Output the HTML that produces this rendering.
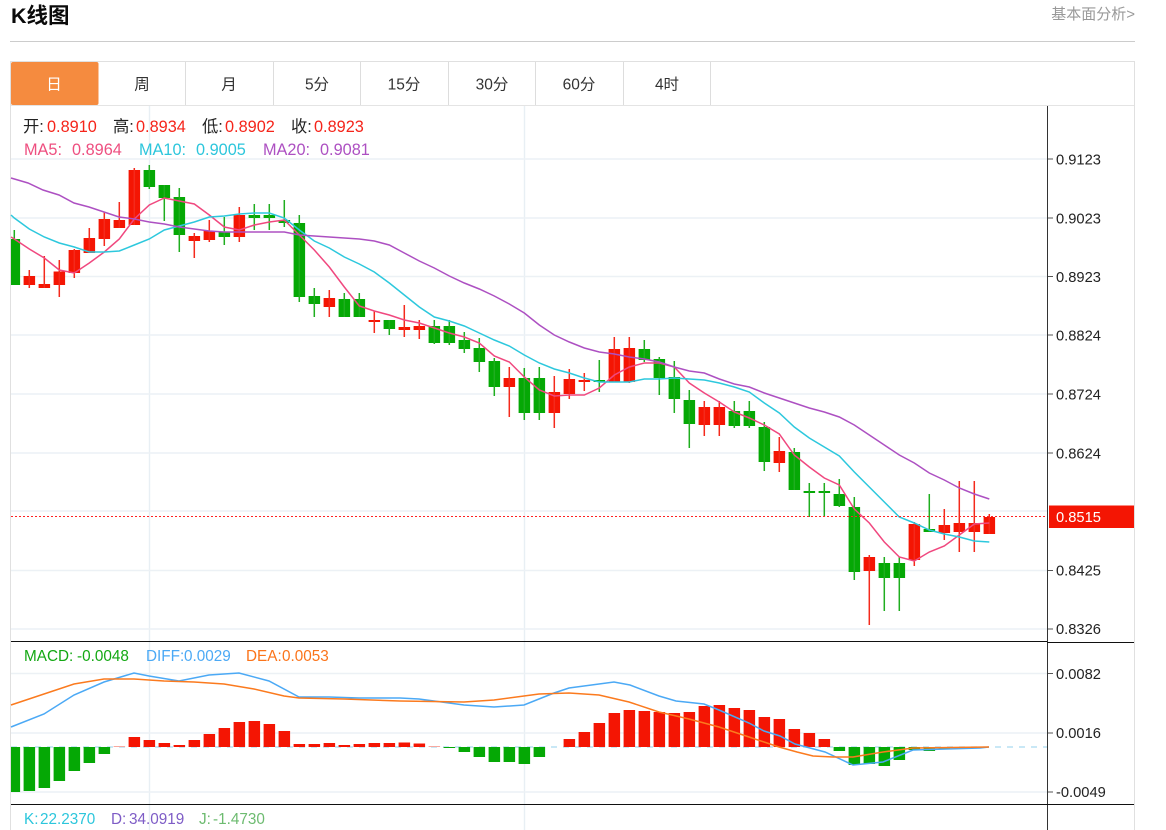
<!DOCTYPE html>
<html><head><meta charset="utf-8"><title>K线图</title>
<style>
html,body{margin:0;padding:0;background:#fff;width:1166px;height:830px;overflow:hidden}
svg{display:block;position:absolute;left:0;top:0}
text{font-family:"Liberation Sans","Noto Sans CJK SC",sans-serif}
</style></head><body>
<svg width="1166" height="830" viewBox="0 0 1166 830" xmlns="http://www.w3.org/2000/svg">
<text x="11" y="23" font-size="21.5" font-weight="700" fill="#0a0a0a">K线图</text>
<text x="1135" y="19" font-size="15" fill="#999" text-anchor="end">基本面分析&gt;</text>
<rect x="10" y="41" width="1125" height="1" fill="#ccc"/>

<!-- frame -->
<path d="M10.5 830V61.5H1134.5V830" fill="none" stroke="#e0e0e0"/>
<path d="M11 105.5H1134" stroke="#e4e4e4"/>
<rect x="11" y="62" width="87.5" height="43" rx="2" fill="#f58b3f"/>
<path d="M185.5 62V105M273.5 62V105M360.5 62V105M448.5 62V105M535.5 62V105M623.5 62V105M710.5 62V105" stroke="#ddd"/>
<g font-size="15.500" text-anchor="middle" fill="#333">
<text x="54" y="89.500" fill="#fff">日</text>
<text x="142" y="89.500">周</text>
<text x="229" y="89.500">月</text>
<text x="317" y="89.500">5分</text>
<text x="404" y="89.500">15分</text>
<text x="492" y="89.500">30分</text>
<text x="579" y="89.500">60分</text>
<text x="667" y="89.500">4时</text>
</g>

<!-- grid -->
<path d="M149.5 106V830M524.5 106V830" stroke="#e8eff4" stroke-width="1.4"/>
<path d="M11 159H1047M11 218H1047M11 276.500H1047M11 335H1047M11 394H1047M11 453H1047M11 511H1047M11 570.500H1047M11 629H1047M11 673.500H1047M11 733H1047M11 792H1047" stroke="#ecf1f5" stroke-width="1.4"/>

<!-- green candles -->
<path fill="#05a805" d="M11 239H20.100V285H11ZM143.600 170h11.500V187h-11.500ZM158.600 185h11.500V198h-11.500ZM173.600 197h11.500V235h-11.500ZM218.600 232h11.500V237h-11.500ZM248.600 215h11.500V218h-11.500ZM263.600 215h11.500V218h-11.500ZM278.600 220h11.500V223h-11.500ZM293.600 223h11.500V297h-11.500ZM308.600 296h11.500V304h-11.500ZM338.600 299h11.500V317h-11.500ZM353.600 299h11.500V317h-11.500ZM383.600 320h11.500V329h-11.500ZM428.600 326h11.500V343h-11.500ZM443.600 326h11.500V343h-11.500ZM458.600 340h11.500V349h-11.500ZM473.600 348h11.500V362h-11.500ZM488.600 361h11.500V387h-11.500ZM518.600 378h11.500V413h-11.500ZM533.600 378h11.500V413h-11.500ZM593.600 380h11.500V382h-11.500ZM638.600 349h11.500V360h-11.500ZM653.600 359h11.500V378h-11.500ZM668.600 377h11.500V399h-11.500ZM683.600 400h11.500V424h-11.500ZM728.600 411h11.500V426h-11.500ZM743.600 411h11.500V426h-11.500ZM758.600 427h11.500V462h-11.500ZM788.600 452h11.500V490h-11.500ZM803.600 491h11.500V493h-11.500ZM818.600 491h11.500V493h-11.500ZM833.600 494h11.500V506h-11.500ZM848.600 507h11.500V572h-11.500ZM878.600 563h11.500V578h-11.500ZM893.600 563h11.500V578h-11.500ZM923.600 529h11.500V532h-11.500Z"/>
<path fill="none" stroke="#1fae1f" stroke-width="1.500" d="M14.300 230V239M149.300 165V189M164.300 185V221M179.300 188V252M224.300 217V245M254.300 204V230M269.300 204V230M284.300 200V227M299.300 215V302M314.300 288V317M344.300 293V317M359.300 293V317M389.300 320V335M434.300 320V344M449.300 320V345M464.300 332V353M479.300 338V372M494.300 358V396M524.300 368V420M539.300 367V420M599.300 360V392M644.300 340V362M659.300 357V395M674.300 361V413M689.300 390V448M734.300 401V428M749.300 401V428M764.300 422V471M794.300 448V490M809.300 483V517M824.300 483V517M839.300 479V507M854.300 497V580M884.300 557V611M899.300 557V611M929.300 494V532"/>
<!-- red candles -->
<path fill="#f41503" d="M23.600 276h11.500V285h-11.500ZM38.600 284h11.500V288h-11.500ZM53.600 271.500h11.500V285h-11.500ZM68.600 250h11.500V273h-11.500ZM83.600 238h11.500V253h-11.500ZM98.600 219h11.500V239h-11.500ZM113.600 220h11.500V228h-11.500ZM128.600 170h11.500V225h-11.500ZM188.600 236h11.500V241h-11.500ZM203.600 231h11.500V240h-11.500ZM233.600 215h11.500V237h-11.500ZM323.600 298h11.500V307h-11.500ZM368.600 320h11.500V322h-11.500ZM398.600 327h11.500V330h-11.500ZM413.600 326h11.500V330h-11.500ZM503.600 378h11.500V387h-11.500ZM548.600 392h11.500V413h-11.500ZM563.600 379h11.500V394h-11.500ZM578.600 380h11.500V382h-11.500ZM608.600 349h11.500V382h-11.500ZM623.600 348h11.500V382h-11.500ZM698.600 407h11.500V425h-11.500ZM713.600 407h11.500V425h-11.500ZM773.600 451h11.500V463h-11.500ZM863.600 557h11.500V571h-11.500ZM908.600 524h11.500V560h-11.500ZM938.600 525h11.500V533h-11.500ZM953.600 523h11.500V532h-11.500ZM968.600 523h11.500V532h-11.500ZM983.600 517h11.500V534h-11.500Z"/>
<path fill="none" stroke="#f42a1c" stroke-width="1.500" d="M29.300 270V288M44.300 256V288M59.300 260V297M74.300 249V278M89.300 228V253M104.300 212V246M119.300 202V228M134.300 168V225M194.300 233V258M209.300 220V242M239.300 207V242M329.300 290V317M374.300 311V333M404.300 305V337M419.300 320V339M509.300 367V417M554.300 376V428M569.300 369V399M584.300 373V391M614.300 337V382M629.300 337V383M704.300 401V436M719.300 401V436M779.300 437V472M869.300 555V625M914.300 522V566M944.300 509V540M959.300 481V552M974.300 481V552M989.300 514V534"/>

<!-- MA lines -->
<polyline fill="none" stroke="#f0487f" stroke-width="1.500" points="11,237 14.300,239 29.300,249 44.300,258 59.300,270 74.300,273 89.300,263 104.300,252 119.300,239 134.300,219 149.300,205 164.300,198 179.300,201 194.300,204 209.300,215 224.300,227 239.300,230 254.300,225 269.300,222 284.300,220 299.300,235 314.300,250 329.300,267 344.300,287 359.300,306 374.300,311 389.300,315 404.300,320 419.300,323 434.300,328 449.300,333 464.300,337 479.300,343 494.300,356 509.300,362 524.300,377 539.300,390 554.300,396 569.300,395 584.300,395 599.300,388 614.300,375 629.300,367 644.300,363 659.300,363 674.300,367 689.300,383 704.300,393 719.300,402 734.300,412 749.300,418 764.300,425 779.300,434 794.300,455 809.300,467 824.300,478 839.300,485 854.300,509 869.300,523 884.300,542 899.300,557 914.300,561 929.300,552 944.300,546 959.300,535 974.300,524 989.300,523"/>
<polyline fill="none" stroke="#2dc8dd" stroke-width="1.500" points="11,215 14.300,218 29.300,229 44.300,237 59.300,243 74.300,247 89.300,252 104.300,252 119.300,251 134.300,245 149.300,239 164.300,230 179.300,226 194.300,222 209.300,217 224.300,216 239.300,214 254.300,213 269.300,213 284.300,218 299.300,230 314.300,241 329.300,248 344.300,257 359.300,264 374.300,272 389.300,283 404.300,295 419.300,307 434.300,317 449.300,321 464.300,326 479.300,333 494.300,340 509.300,346 524.300,355 539.300,363 554.300,369 569.300,373 584.300,378 599.300,382 614.300,382 629.300,382 644.300,379 659.300,379 674.300,378 689.300,379 704.300,380 719.300,383 734.300,387 749.300,392 764.300,403 779.300,413 794.300,427 809.300,438 824.300,447 839.300,456 854.300,472 869.300,487 884.300,502 899.300,517 914.300,523 929.300,530 944.300,534 959.300,537 974.300,541 989.300,542"/>
<polyline fill="none" stroke="#ad50c2" stroke-width="1.500" points="11,178 28,183 43,190 59,195 74,203 89,207 104,212 119,217 134.300,219 149.300,222 164.300,224 179.300,227 194.300,229 209.300,231 224.300,232 239.300,232 254.300,232 269.300,232 284.300,232 299.300,235 314.300,236 329.300,237 344.300,238 359.300,239 374.300,241 389.300,245 404.300,253 419.300,261 434.300,268 449.300,276 464.300,283 479.300,289 494.300,296 509.300,304 524.300,313 539.300,325 554.300,335 569.300,342 584.300,348 599.300,352 614.300,354 629.300,357 644.300,359 659.300,362 674.300,367 689.300,371 704.300,373 719.300,379 734.300,384 749.300,387 764.300,393 779.300,398 794.300,403 809.300,408 824.300,412 839.300,417 854.300,425 869.300,435 884.300,445 899.300,455 914.300,463 929.300,473 944.300,480 959.300,488 974.300,494 989.300,499"/>

<!-- current price line -->
<path d="M11 516.500H1047" stroke="#f22" stroke-width="1" stroke-dasharray="2 2"/>

<!-- MACD -->
<path d="M11 747H1047" stroke="#a9daf0" stroke-width="1.2" stroke-dasharray="6 6"/>
<path fill="#05a805" d="M11 747H20.100V792H11ZM23.600 747h11.500V791h-11.500ZM38.600 747h11.500V788h-11.500ZM53.600 747h11.500V781h-11.500ZM68.600 747h11.500V771h-11.500ZM83.600 747h11.500V763h-11.500ZM98.600 747h11.500V754h-11.500ZM443.600 747h11.500V748h-11.500ZM458.600 747h11.500V752h-11.500ZM473.600 747h11.500V757h-11.500ZM488.600 747h11.500V762h-11.500ZM503.600 747h11.500V762h-11.500ZM518.600 747h11.500V764h-11.500ZM533.600 747h11.500V757h-11.500ZM833.600 747h11.500V751h-11.500ZM848.600 747h11.500V765h-11.500ZM863.600 747h11.500V764h-11.500ZM878.600 747h11.500V766h-11.500ZM893.600 747h11.500V760h-11.500ZM908.600 747h11.500V750h-11.500ZM923.600 747h11.500V751h-11.500ZM938.600 747h11.500V749h-11.500ZM953.600 747h11.500V748h-11.500Z"/>
<path fill="#f41503" d="M128.600 737h11.500V747h-11.500ZM143.600 740h11.500V747h-11.500ZM158.600 743h11.500V747h-11.500ZM173.600 745h11.500V747h-11.500ZM188.600 740h11.500V747h-11.500ZM203.600 734h11.500V747h-11.500ZM218.600 728h11.500V747h-11.500ZM233.600 722h11.500V747h-11.500ZM248.600 721h11.500V747h-11.500ZM263.600 724h11.500V747h-11.500ZM278.600 731h11.500V747h-11.500ZM293.600 744h11.500V747h-11.500ZM308.600 744h11.500V747h-11.500ZM323.600 743h11.500V747h-11.500ZM338.600 745h11.500V747h-11.500ZM353.600 744h11.500V747h-11.500ZM368.600 743h11.500V747h-11.500ZM383.600 743h11.500V747h-11.500ZM398.600 742.500h11.500V747h-11.500ZM413.600 743.500h11.500V747h-11.500ZM563.600 739h11.500V747h-11.500ZM578.600 732h11.500V747h-11.500ZM593.600 723h11.500V747h-11.500ZM608.600 713h11.500V747h-11.500ZM623.600 710h11.500V747h-11.500ZM638.600 711h11.500V747h-11.500ZM653.600 712h11.500V747h-11.500ZM668.600 713h11.500V747h-11.500ZM683.600 712h11.500V747h-11.500ZM698.600 706h11.500V747h-11.500ZM713.600 705h11.500V747h-11.500ZM728.600 708h11.500V747h-11.500ZM743.600 710h11.500V747h-11.500ZM758.600 717h11.500V747h-11.500ZM773.600 719h11.500V747h-11.500ZM788.600 729h11.500V747h-11.500ZM803.600 733h11.500V747h-11.500ZM818.600 739h11.500V747h-11.500Z"/>
<path fill="#f8a9a0" d="M113.600 746h11.500V747h-11.500ZM428.600 746h11.500V747h-11.500Z"/>
<polyline fill="none" stroke="#4ba9f5" stroke-width="1.500" points="11,727 44,714 74,695 104,682 134,673 149,676 179,681 209,675 239,673 269,681 299,697 329,697 359,698 389,698 400,698 419,699 434,701 464,705 494,707 524,705 554,693 569,688 614,682 630,685 659,696 676,701 704,704 719,710 749,723 764,731 780,736 795,744 825,752 853,765 883,762 913,750 980,748 989,747"/>
<polyline fill="none" stroke="#fb7a1e" stroke-width="1.500" points="11,705 44,694 74,684 104,679 134,679 164,681 194,682 224,684 254,689 284,696 299,698 344,699 400,701 464,702 479,701 494,700 524,696 539,694 569,693 599,695 629,702 659,712 689,719 719,727 749,737 779,747 797,752 813,756 833,757 853,757 883,752 913,748 989,747"/>

<!-- axis -->
<path d="M1047.500 106V830" stroke="#333" stroke-width="1"/>
<path d="M1048 159h5M1048 218h5M1048 276.500h5M1048 335h5M1048 394h5M1048 453h5M1048 570.500h5M1048 629h5M1048 673.500h5M1048 733h5M1048 792h5" stroke="#555"/>
<g font-size="14.700" fill="#222">
<text x="1056" y="164.500">0.9123</text>
<text x="1056" y="223.500">0.9023</text>
<text x="1056" y="282">0.8923</text>
<text x="1056" y="340.500">0.8824</text>
<text x="1056" y="399.500">0.8724</text>
<text x="1056" y="458.500">0.8624</text>
<text x="1056" y="575.500">0.8425</text>
<text x="1056" y="634">0.8326</text>
<text x="1056" y="679">0.0082</text>
<text x="1056" y="738">0.0016</text>
<text x="1056" y="797">-0.0049</text>
</g>
<rect x="1049" y="505.500" width="85" height="22.500" fill="#f41503"/>
<text x="1056" y="522" font-size="14.700" fill="#fff">0.8515</text>

<!-- dividers -->
<path d="M11 641.500H1047M1047 642.500H1134M11 804.500H1134" stroke="#111" stroke-width="1"/>

<!-- legends -->
<g font-size="16.300">
<text x="23" y="132" fill="#222">开:</text><text x="47" y="132" fill="#f5241a">0.8910</text>
<text x="113" y="132" fill="#222">高:</text><text x="136" y="132" fill="#f5241a">0.8934</text>
<text x="202" y="132" fill="#222">低:</text><text x="225" y="132" fill="#f5241a">0.8902</text>
<text x="291" y="132" fill="#222">收:</text><text x="314" y="132" fill="#f5241a">0.8923</text>
<text x="24" y="155" fill="#ee4f80">MA5:</text><text x="72" y="155" fill="#ee4f80">0.8964</text>
<text x="139" y="155" fill="#2cc6dc">MA10:</text><text x="196" y="155" fill="#2cc6dc">0.9005</text>
<text x="263" y="155" fill="#ad50c2">MA20:</text><text x="320" y="155" fill="#ad50c2">0.9081</text>
</g>
<g font-size="15.300">
<text x="24" y="661" fill="#13a813">MACD:</text><text x="77" y="661" fill="#13a813">-0.0048</text>
<text x="146" y="661" fill="#4ba9f5">DIFF:</text><text x="184" y="661" fill="#4ba9f5">0.0029</text>
<text x="246" y="661" fill="#fb741a">DEA:</text><text x="282" y="661" fill="#fb741a">0.0053</text>
<text x="24" y="824" fill="#2cc6dc">K:</text><text x="40" y="824" fill="#2cc6dc">22.2370</text>
<text x="111" y="824" fill="#7e5cc6">D:</text><text x="129" y="824" fill="#7e5cc6">34.0919</text>
<text x="199" y="824" fill="#6dbb70">J:</text><text x="213" y="824" fill="#6dbb70">-1.4730</text>
</g>
</svg>
</body></html>
